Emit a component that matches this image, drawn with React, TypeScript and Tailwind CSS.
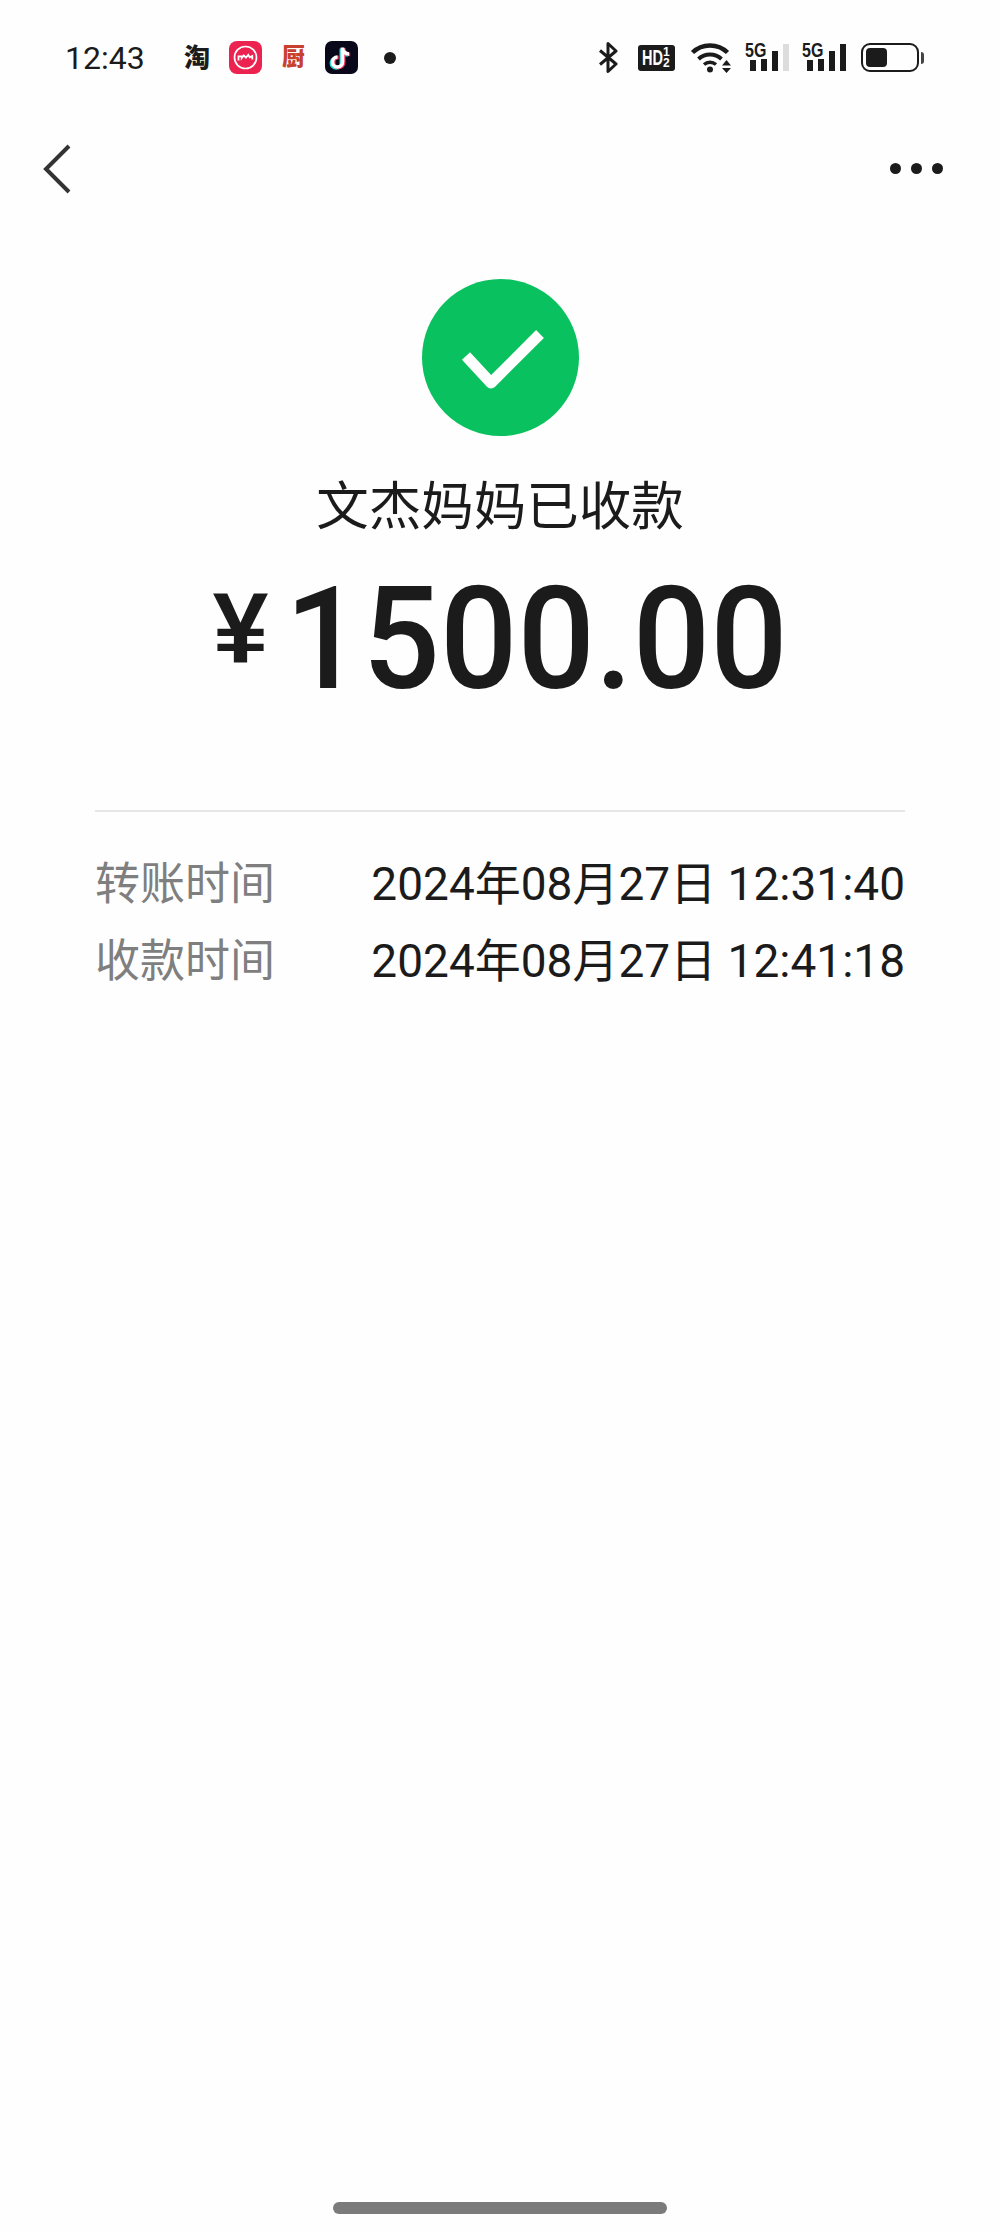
const cjk = `font-['Roboto','Noto_Sans_CJK_SC',sans-serif]`;

function RedIcon() {
  return (
    <svg width="33" height="33" viewBox="0 0 33 33">
      <rect x="0" y="0" width="33" height="33" rx="8" fill="#ec2350" />
      <circle cx="16.5" cy="16.5" r="11" fill="none" stroke="#fff" strokeWidth="1.7" />
      <path d="M9.5 19.5v-4.2h3.2v1.7l2-2.6 2.2 2.2 2.4-2.8 1.4 2.6 2.6-1.4v3.5" fill="none" stroke="#fff" strokeWidth="1.8" />
    </svg>
  );
}

function TikTok() {
  const d = "M17.5 6.5v14.5a5 5 0 1 1-5-5M17.5 7c.3 3.5 3 6 6.5 6";
  return (
    <svg width="33" height="33" viewBox="0 0 33 33">
      <rect width="33" height="33" rx="7" fill="#08081a" />
      <path d={d} transform="translate(-1.2 1)" fill="none" stroke="#25d8d8" strokeWidth="3.6" />
      <path d={d} transform="translate(1.2 .4)" fill="none" stroke="#f0315a" strokeWidth="3.6" />
      <path d={d} fill="none" stroke="#fff" strokeWidth="3.6" />
    </svg>
  );
}

function Bluetooth() {
  return (
    <svg width="20" height="32" viewBox="0 0 20 32">
      <path d="M2 8.5 18 22 10 29.5V1.5L18 9 2 22.5" fill="none" stroke="#1b1b1b" strokeWidth="3" strokeLinejoin="round" />
    </svg>
  );
}

function Wifi() {
  return (
    <svg width="42" height="32" viewBox="0 0 42 32">
      <path d="M2.5 10.5C12 1 28 1 37.5 10.5" fill="none" stroke="#1b1b1b" strokeWidth="4.5" />
      <path d="M8.5 17C15 11 25 11 31.5 17" fill="none" stroke="#1b1b1b" strokeWidth="4" />
      <path d="M14 22.5C17.5 19.5 22.5 19.5 26 22.5" fill="none" stroke="#1b1b1b" strokeWidth="3.4" />
      <circle cx="20" cy="27.5" r="3" fill="#1b1b1b" />
      <path d="M32 23.5 36.5 18 41 23.5ZM32 26 36.5 31 41 26Z" fill="#1b1b1b" />
    </svg>
  );
}

function Signal({ dim }: { dim?: boolean }) {
  const heights = [11, 12, 20, 27];
  return (
    <div className="relative flex h-[32px] w-[44px] items-end justify-end gap-[5px] pb-[3px]">
      <span className="absolute left-0 top-[-3px] origin-left scale-x-[0.8] font-['Liberation_Sans',sans-serif] text-[20px] font-bold leading-[22px] text-[#1b1b1b]">
        5G
      </span>
      {heights.map((h, i) => (
        <span
          key={i}
          className={`w-[6px] ${dim && i === 3 ? "bg-[#dcdcdc]" : "bg-[#1b1b1b]"}`}
          style={{ height: h }}
        />
      ))}
    </div>
  );
}

function StatusBar() {
  return (
    <div className="flex h-[116px] items-center pl-[65px] pr-[76px] pb-[1px] text-[#1b1b1b]">
      <span className="w-[100px] font-['Roboto',sans-serif] text-[32px] leading-none">12:43</span>
      <div className="flex items-center">
        <span className={`w-[64px] text-center ${cjk} text-[26px] font-black leading-none`}>淘</span>
        <RedIcon />
        <span className={`w-[63px] text-center ${cjk} text-[23px] font-black leading-none text-[#c8402f]`}>厨</span>
        <TikTok />
        <span className="ml-[26px] h-[12px] w-[12px] rounded-full bg-[#1b1b1b]" />
      </div>
      <div className="ml-auto flex items-center">
        <Bluetooth />
        <span className="ml-[20px] flex h-[26px] w-[37px] items-center rounded-[3px] bg-[#1b1b1b] pl-[4px] font-['Liberation_Sans',sans-serif] font-bold text-white">
          <span className="w-[21px] origin-left scale-x-[0.66] whitespace-nowrap text-[22px] leading-none">HD</span>
          <span className="flex flex-col items-center text-[12px] leading-[11px]"><span>1</span><span>2</span></span>
        </span>
        <div className="ml-[15px]"><Wifi /></div>
        <div className="ml-[13px]"><Signal dim /></div>
        <div className="ml-[13px]"><Signal /></div>
        <div className="ml-[15px] flex items-center">
          <div className="flex h-[29px] w-[58px] items-center rounded-[9px] border-[2px] border-[#1b1b1b] p-[3px]">
            <div className="h-full w-[21px] rounded-[4px] bg-[#1b1b1b]" />
          </div>
          <span className="ml-[2px] h-[12px] w-[3px] rounded-r-sm bg-[#444]" />
        </div>
      </div>
    </div>
  );
}

function NavBar() {
  return (
    <div className="flex h-[106px] items-center justify-between pl-[43px] pr-[57px] pb-[1px]">
      <svg width="28" height="52" viewBox="0 0 28 52">
        <path d="M26 3 3 26l23 23" fill="none" stroke="#333" strokeWidth="4" />
      </svg>
      <div className="flex gap-[10px]">
        <span className="h-[11px] w-[11px] rounded-full bg-[#1b1b1b]" />
        <span className="h-[11px] w-[11px] rounded-full bg-[#1b1b1b]" />
        <span className="h-[11px] w-[11px] rounded-full bg-[#1b1b1b]" />
      </div>
    </div>
  );
}

function Row({ label, value }: { label: string; value: string }) {
  return (
    <div className="flex h-[77px] items-center justify-between">
      <span className="text-[45px] text-[#7f7f7f]">{label}</span>
      <span className="text-[#1b1b1b]">{value}</span>
    </div>
  );
}

export default function App() {
  return (
    <div className="relative flex min-h-[2233px] w-[1000px] flex-col bg-[#fefefe]">
      <StatusBar />
      <NavBar />
      <div className="flex flex-col items-center pt-[57px]">
        <svg width="157" height="157" viewBox="0 0 157 157">
          <circle cx="78.5" cy="78.5" r="78.5" fill="#0ac15f" />
          <path d="M44 77 69 104 118 55" fill="none" stroke="#fff" strokeWidth="11" strokeLinejoin="round" />
        </svg>
        <div className={`mt-[36px] ${cjk} text-[52.5px] leading-[70px] text-[#1b1b1b]`}>文杰妈妈已收款</div>
        <div className="mt-[23px] flex items-start text-[#1b1b1b]">
          <span className="mr-[17px] mt-[13px] font-['Liberation_Sans',sans-serif] text-[100px] font-bold leading-[100px]">¥</span>
          <span className="w-[502px] origin-left scale-x-[0.96] whitespace-nowrap font-['Roboto',sans-serif] text-[142px] font-medium leading-[150px]">1500.00</span>
        </div>
      </div>
      <div className={`mx-[95px] mt-[95px] border-t-[2px] border-[#e6e6e6] pt-[34px] ${cjk} text-[46px]`}>
        <Row label="转账时间" value="2024年08月27日 12:31:40" />
        <Row label="收款时间" value="2024年08月27日 12:41:18" />
      </div>
      <div className="absolute bottom-[19px] left-[333px] h-[12px] w-[334px] rounded-full bg-[#7b7b7b]" />
    </div>
  );
}
